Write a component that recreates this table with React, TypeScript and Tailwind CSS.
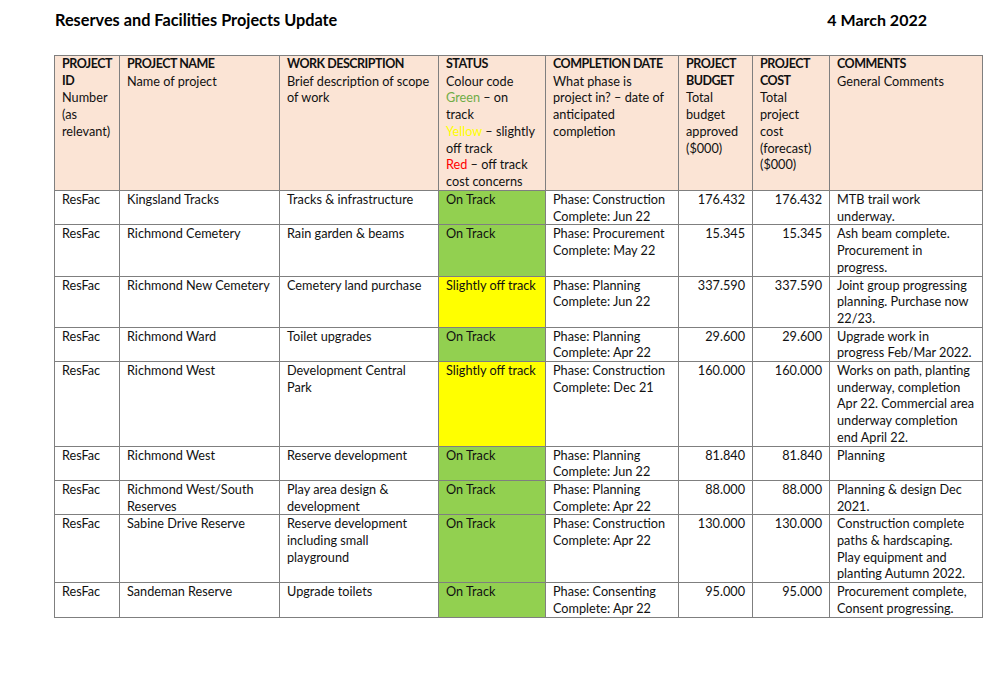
import React from "react";

type Row = {
  id: string;
  name: string[];
  work: string[];
  status: "on" | "slight";
  phase: string[];
  budget: string;
  cost: string;
  comments: string[];
};

const rows: Row[] = [
  {
    id: "ResFac",
    name: ["Kingsland Tracks"],
    work: ["Tracks & infrastructure"],
    status: "on",
    phase: ["Phase: Construction", "Complete: Jun 22"],
    budget: "176.432",
    cost: "176.432",
    comments: ["MTB trail work", "underway."],
  },
  {
    id: "ResFac",
    name: ["Richmond Cemetery"],
    work: ["Rain garden & beams"],
    status: "on",
    phase: ["Phase: Procurement", "Complete: May 22"],
    budget: "15.345",
    cost: "15.345",
    comments: ["Ash beam complete.", "Procurement in", "progress."],
  },
  {
    id: "ResFac",
    name: ["Richmond New Cemetery"],
    work: ["Cemetery land purchase"],
    status: "slight",
    phase: ["Phase: Planning", "Complete: Jun 22"],
    budget: "337.590",
    cost: "337.590",
    comments: ["Joint group progressing", "planning. Purchase now", "22/23."],
  },
  {
    id: "ResFac",
    name: ["Richmond Ward"],
    work: ["Toilet upgrades"],
    status: "on",
    phase: ["Phase: Planning", "Complete: Apr 22"],
    budget: "29.600",
    cost: "29.600",
    comments: ["Upgrade work in", "progress Feb/Mar 2022."],
  },
  {
    id: "ResFac",
    name: ["Richmond West"],
    work: ["Development Central", "Park"],
    status: "slight",
    phase: ["Phase: Construction", "Complete: Dec 21"],
    budget: "160.000",
    cost: "160.000",
    comments: [
      "Works on path, planting",
      "underway, completion",
      "Apr 22. Commercial area",
      "underway completion",
      "end April 22.",
    ],
  },
  {
    id: "ResFac",
    name: ["Richmond West"],
    work: ["Reserve development"],
    status: "on",
    phase: ["Phase: Planning", "Complete: Jun 22"],
    budget: "81.840",
    cost: "81.840",
    comments: ["Planning"],
  },
  {
    id: "ResFac",
    name: ["Richmond West/South", "Reserves"],
    work: ["Play area design &", "development"],
    status: "on",
    phase: ["Phase: Planning", "Complete: Apr 22"],
    budget: "88.000",
    cost: "88.000",
    comments: ["Planning & design Dec", "2021."],
  },
  {
    id: "ResFac",
    name: ["Sabine Drive Reserve"],
    work: ["Reserve development", "including small", "playground"],
    status: "on",
    phase: ["Phase: Construction", "Complete: Apr 22"],
    budget: "130.000",
    cost: "130.000",
    comments: [
      "Construction complete",
      "paths & hardscaping.",
      "Play equipment and",
      "planting Autumn 2022.",
    ],
  },
  {
    id: "ResFac",
    name: ["Sandeman Reserve"],
    work: ["Upgrade toilets"],
    status: "on",
    phase: ["Phase: Consenting", "Complete: Apr 22"],
    budget: "95.000",
    cost: "95.000",
    comments: ["Procurement complete,", "Consent progressing."],
  },
];

const Lines = ({ lines }: { lines: string[] }) => (
  <>
    {lines.map((l, i) => (
      <div key={i} className="whitespace-nowrap">
        {l}
      </div>
    ))}
  </>
);

const cell = "border border-[#7f7f7f] px-[7px] py-0 align-top";
const head = "font-bold text-[12.5px] tracking-[-0.5px] whitespace-nowrap";

export default function App() {
  return (
    <div className="w-[985px] h-[675px] bg-white text-[#111] font-['Lato','Liberation_Sans',sans-serif] text-[12.7px] leading-[16.7px]">
      {/* Title */}
      <div className="flex justify-between pl-[55px] pr-[58px] pt-[10px] h-[55px] text-black">
        <h1 className="text-[16.3px] font-bold leading-[20px]">
          Reserves and Facilities Projects Update
        </h1>
        <div className="text-[16px] font-bold leading-[20px]">4 March 2022</div>
      </div>

      <div className="pl-[54px]">
        <table className="table-fixed border-collapse w-[928px]">
          <colgroup>
            <col className="w-[65px]" />
            <col className="w-[160px]" />
            <col className="w-[159px]" />
            <col className="w-[107px]" />
            <col className="w-[133px]" />
            <col className="w-[74px]" />
            <col className="w-[77px]" />
            <col className="w-[153px]" />
          </colgroup>
          <thead>
            <tr className="bg-[#fbe4d5] text-left">
              <th className={`${cell} font-normal h-[135px]`}>
                <div className={head}>PROJECT</div>
                <div className={head}>ID</div>
                <div>Number</div>
                <div>(as</div>
                <div>relevant)</div>
              </th>
              <th className={`${cell} font-normal`}>
                <div className={head}>PROJECT NAME</div>
                <div>Name of project</div>
              </th>
              <th className={`${cell} font-normal`}>
                <div className={head}>WORK DESCRIPTION</div>
                <div className="whitespace-nowrap">Brief description of scope</div>
                <div>of work</div>
              </th>
              <th className={`${cell} font-normal`}>
                <div className={head}>STATUS</div>
                <div>Colour code</div>
                <div>
                  <span className="text-[#70ad47]">Green</span> – on
                </div>
                <div>track</div>
                <div className="whitespace-nowrap">
                  <span className="text-[#ffff00]">Yellow</span> – slightly
                </div>
                <div>off track</div>
                <div>
                  <span className="text-[#ff0000]">Red</span> – off track
                </div>
                <div>cost concerns</div>
              </th>
              <th className={`${cell} font-normal`}>
                <div className={head}>COMPLETION DATE</div>
                <div>What phase is</div>
                <div className="whitespace-nowrap">project in? – date of</div>
                <div>anticipated</div>
                <div>completion</div>
              </th>
              <th className={`${cell} font-normal`}>
                <div className={head}>PROJECT</div>
                <div className={head}>BUDGET</div>
                <div>Total</div>
                <div>budget</div>
                <div>approved</div>
                <div>($000)</div>
              </th>
              <th className={`${cell} font-normal`}>
                <div className={head}>PROJECT</div>
                <div className={head}>COST</div>
                <div>Total</div>
                <div>project</div>
                <div>cost</div>
                <div>(forecast)</div>
                <div>($000)</div>
              </th>
              <th className={`${cell} font-normal`}>
                <div className={head}>COMMENTS</div>
                <div>General Comments</div>
              </th>
            </tr>
          </thead>
          <tbody>
            {rows.map((r, i) => (
              <tr key={i}>
                <td className={cell}>{r.id}</td>
                <td className={cell}>
                  <Lines lines={r.name} />
                </td>
                <td className={cell}>
                  <Lines lines={r.work} />
                </td>
                <td
                  className={`${cell} whitespace-nowrap ${
                    r.status === "on" ? "bg-[#92d050]" : "bg-[#ffff00]"
                  }`}
                >
                  {r.status === "on" ? "On Track" : "Slightly off track"}
                </td>
                <td className={cell}>
                  <Lines lines={r.phase} />
                </td>
                <td className={`${cell} text-right`}>{r.budget}</td>
                <td className={`${cell} text-right`}>{r.cost}</td>
                <td className={cell}>
                  <Lines lines={r.comments} />
                </td>
              </tr>
            ))}
          </tbody>
        </table>
      </div>
    </div>
  );
}
